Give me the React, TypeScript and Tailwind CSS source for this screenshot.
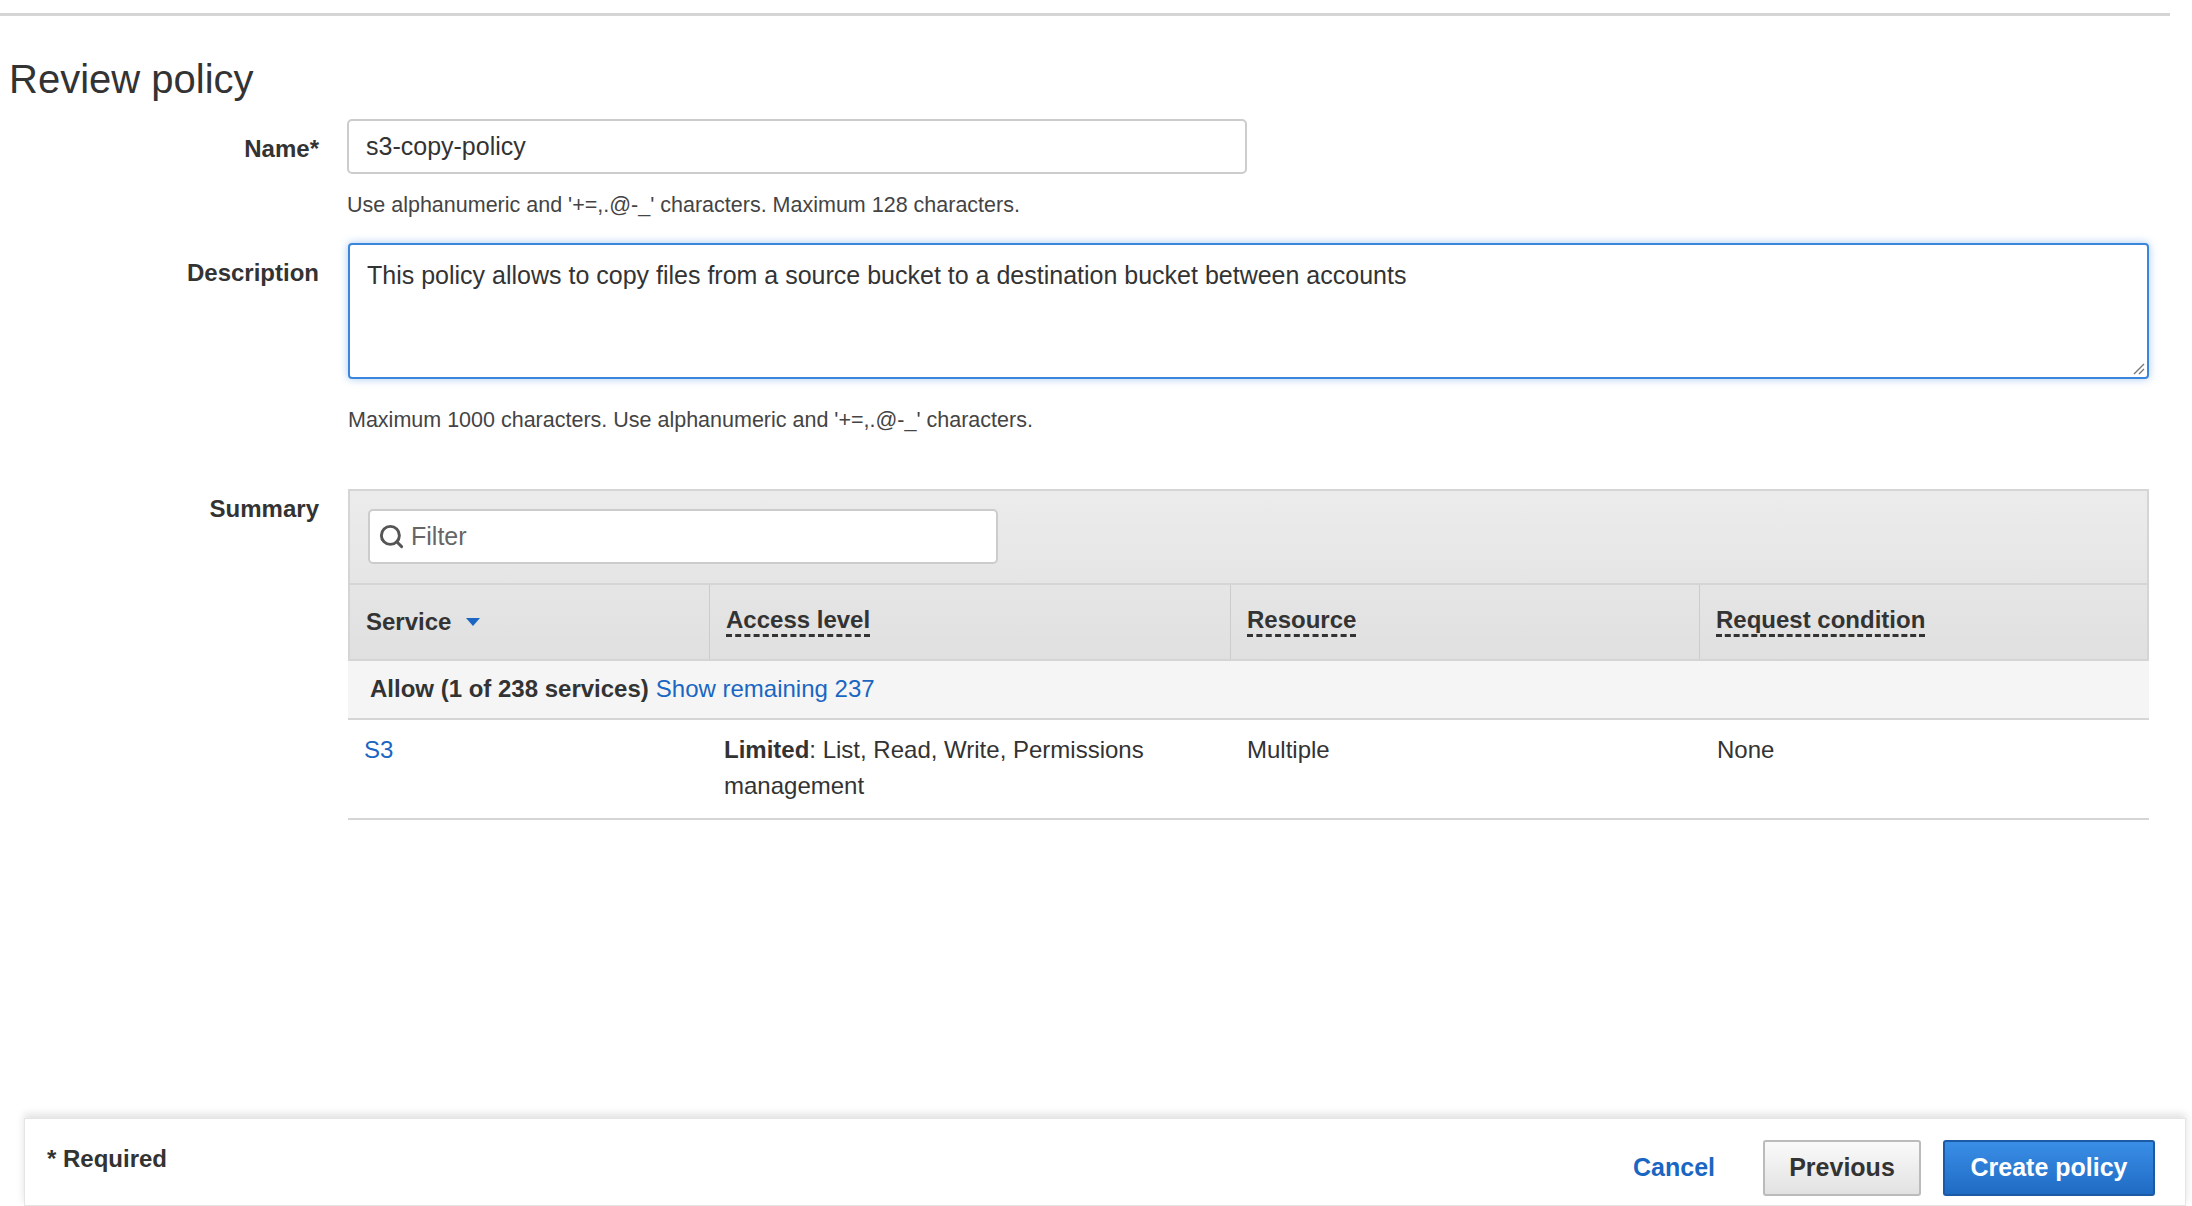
import { Search } from 'lucide-react'

const font = { fontFamily: '"Liberation Sans", Arial, Helvetica, sans-serif' }

function Label({ children }: { children: React.ReactNode }) {
  return <div className="w-[319px] shrink-0 text-right pr-0 font-bold text-[24px] text-[#333]">{children}</div>
}

export default function App() {
  return (
    <div className="w-[2192px] h-[1206px] bg-white relative overflow-hidden text-[#333]" style={font}>
      <div className="ml-0 mr-[22px] mt-[13px] h-[3px] bg-[#d5d5d5]" />
      <h1 className="ml-[9px] mt-[39px] text-[40px] leading-[48px] text-[#333]">Review policy</h1>

      <div className="flex items-start mt-[16px]">
        <div className="mt-[12px]"><Label>Name*</Label></div>
        <div className="ml-[28px]">
          <div className="w-[900px] h-[55px] border-2 border-[#ccc] rounded-[5px] flex items-center px-[17px] text-[25px]">s3-copy-policy</div>
          <div className="mt-[15px] text-[21.5px] text-[#444]">Use alphanumeric and '+=,.@-_' characters. Maximum 128 characters.</div>
        </div>
      </div>

      <div className="flex items-start mt-[22px]">
        <div className="mt-[12px]"><Label>Description</Label></div>
        <div className="ml-[29px]">
          <div className="w-[1801px] h-[136px] border-2 border-[#3b86dc] rounded-[4px] shadow-[0_0_8px_rgba(59,134,220,0.45)] px-[17px] pt-[12px] text-[25px] relative">
            This policy allows to copy files from a source bucket to a destination bucket between accounts
            <svg className="absolute right-[2px] bottom-[2px]" width="14" height="14" viewBox="0 0 14 14"><path d="M13 3 3 13M13 8 8 13" stroke="#777" strokeWidth="1.4" /></svg>
          </div>
          <div className="mt-[25px] text-[21.5px] text-[#444]">Maximum 1000 characters. Use alphanumeric and '+=,.@-_' characters.</div>
        </div>
      </div>

      <div className="flex items-start mt-[52px]">
        <div className="mt-[2px]"><Label>Summary</Label></div>
        <div className="ml-[29px] w-[1801px]">
          <div className="border-2 border-[#d5d5d5] bg-gradient-to-b from-[#ececec] to-[#e0e0e0]">
            <div className="h-[92px] flex items-center px-[18px]">
              <div className="w-[630px] h-[55px] bg-white border-2 border-[#ccc] rounded-[5px] flex items-center px-[8px] gap-[6px] text-[25px] text-[#666]">
                <Search size={27} strokeWidth={2.6} className="text-[#555]" />
                Filter
              </div>
            </div>
            <div className="flex h-[76px] border-t-2 border-[#d5d5d5] font-bold text-[24px] text-[#333]">
              <div className="w-[360px] flex items-center px-[16px] border-r border-[#ccc] gap-[14px]">
                Service
                <svg width="16" height="10" viewBox="0 0 16 10"><path d="M1 1h14L8 9z" fill="#1a66c2" /></svg>
              </div>
              <div className="w-[521px] flex items-center px-[16px] border-r border-[#ccc]"><span className="border-b-[3px] border-dashed border-[#333] leading-[28px]">Access level</span></div>
              <div className="w-[469px] flex items-center px-[16px] border-r border-[#ccc]"><span className="border-b-[3px] border-dashed border-[#333] leading-[28px]">Resource</span></div>
              <div className="flex-1 flex items-center px-[16px]"><span className="border-b-[3px] border-dashed border-[#333] leading-[28px]">Request condition</span></div>
            </div>
          </div>
          <div className="h-[59px] bg-[#f5f5f5] flex items-center px-[22px] text-[24px] border-b-2 border-[#d5d5d5]">
            <span className="font-bold">Allow (1 of 238 services)</span>
            <span className="ml-[7px] text-[#1a66c2]">Show remaining 237</span>
          </div>
          <div className="flex text-[24px] pt-[12px] pb-[14px] border-b-2 border-[#d5d5d5] leading-[36px]">
            <div className="w-[362px] pl-[16px] text-[#1a66c2]">S3</div>
            <div className="w-[523px] pl-[14px] pr-[30px]"><b>Limited</b>: List, Read, Write, Permissions management</div>
            <div className="w-[469px] pl-[14px]">Multiple</div>
            <div className="flex-1 pl-[15px]">None</div>
          </div>
        </div>
      </div>

      <div className="absolute left-[24px] right-[6px] top-[1118px] bottom-0 bg-white shadow-[0_-4px_8px_rgba(0,0,0,0.12)] border border-[#e5e5e5] flex items-start justify-between pl-[22px] pr-[30px]">
        <div className="mt-[22px] font-bold text-[24px]">* Required</div>
        <div className="flex items-center mt-[21px]">
          <span className="font-bold text-[25px] text-[#1a66c2] mr-[48px]">Cancel</span>
          <div className="h-[56px] w-[158px] border-2 border-[#bbb] rounded-[3px] bg-gradient-to-b from-[#fafafa] to-[#e2e2e2] flex items-center justify-center font-bold text-[25px] text-[#333]">Previous</div>
          <div className="ml-[22px] h-[56px] w-[212px] border-2 border-[#1c5aa5] rounded-[3px] bg-gradient-to-b from-[#3a8ee6] to-[#1f6bc4] flex items-center justify-center font-bold text-[25px] text-white">Create policy</div>
        </div>
      </div>
    </div>
  )
}
